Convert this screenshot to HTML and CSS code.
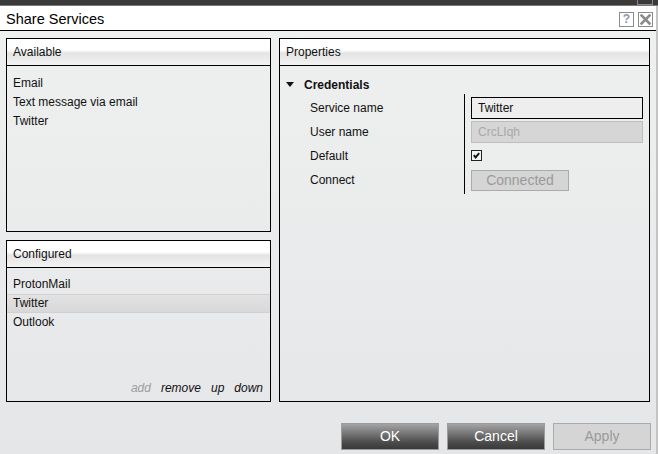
FILE: index.html
```html
<!DOCTYPE html>
<html lang="en">
<head>
    <meta charset="UTF-8">
    <title>Share Services</title>
    <link rel="stylesheet" href="styles.css">
</head>
<body>

<div class="top-strip"><span class="strip-box"></span></div>

<div class="window">
    <!-- Title bar -->
    <div class="title-bar">
        <span class="title">Share Services</span>
        <div class="title-buttons">
            <span class="title-btn help">?</span>
            <span class="title-btn close">
                <svg width="11" height="11" viewBox="0 0 11 11">
                    <path d="M1.5 1.5 L9.5 9.5 M9.5 1.5 L1.5 9.5" stroke="#8a8a8a" stroke-width="2.6" stroke-linecap="square"/>
                </svg>
            </span>
        </div>
    </div>

    <div class="content">
        <div class="left-col">
            <!-- Available services -->
            <div class="panel available">
                <div class="panel-header">Available</div>
                <div class="list">
                    <div class="list-item">Email</div>
                    <div class="list-item">Text message via email</div>
                    <div class="list-item">Twitter</div>
                </div>
            </div>

            <!-- Configured services -->
            <div class="panel configured">
                <div class="panel-header">Configured</div>
                <div class="list">
                    <div class="list-item">ProtonMail</div>
                    <div class="list-item selected">Twitter</div>
                    <div class="list-item">Outlook</div>
                </div>
                <div class="list-actions">
                    <span class="action disabled">add</span>
                    <span class="action">remove</span>
                    <span class="action">up</span>
                    <span class="action">down</span>
                </div>
            </div>
        </div>

        <!-- Properties -->
        <div class="panel properties">
            <div class="panel-header">Properties</div>
            <div class="prop-body">
                <div class="group-head">
                    <span class="triangle"></span>
                    <span class="group-title">Credentials</span>
                </div>
                <div class="prop-grid">
                    <div class="prop-labels">
                        <div class="prop-row">Service name</div>
                        <div class="prop-row">User name</div>
                        <div class="prop-row">Default</div>
                        <div class="prop-row">Connect</div>
                    </div>
                    <div class="prop-values">
                        <div class="prop-row"><div class="field">Twitter</div></div>
                        <div class="prop-row"><div class="field disabled">CrcLIqh</div></div>
                        <div class="prop-row">
                            <span class="checkbox">
                                <svg width="9" height="9" viewBox="0 0 9 9">
                                    <path d="M1.8 4.2 L3.6 6.4 L7.2 2.2" fill="none" stroke="#111" stroke-width="1.9"/>
                                </svg>
                            </span>
                        </div>
                        <div class="prop-row"><div class="small-button">Connected</div></div>
                    </div>
                </div>
            </div>
        </div>
    </div>

    <!-- Dialog buttons -->
    <div class="footer">
        <div class="dlg-button">OK</div>
        <div class="dlg-button">Cancel</div>
        <div class="dlg-button disabled">Apply</div>
    </div>
</div>

</body>
</html>
```

FILE: styles.css
```css
/* Global */
body {
    margin: 0;
    padding: 0;
    width: 658px;
    height: 454px;
    overflow: hidden;
    font-family: "Liberation Sans", Arial, sans-serif;
    font-size: 12px;
    color: #111;
    background-color: #e8e9ea;
}
.top-strip {
    height: 5px;
    background-color: #3a3a3a;
    border-bottom: 1px solid #7a7a7a;
    display: flex;
    justify-content: flex-end;
    padding-right: 5px;
}
.strip-box {
    width: 14px;
    height: 4px;
    border: 1px solid #8a8a8a;
    border-top: none;
}
.window {
    width: 656px;
    height: 448px;
    border-right: 2px solid #c4c4c4;
    background: linear-gradient(#eff1f0, #e5e6e8);
    display: flex;
    flex-direction: column;
}
/* Title bar */
.title-bar {
    height: 24px;
    background-color: #fff;
    border-bottom: 1px solid #000;
    display: flex;
    align-items: center;
    justify-content: space-between;
}
.title {
    font-size: 14.5px;
    padding-left: 6px;
    margin-top: 1px;
    color: #000;
}
.title-buttons {
    display: flex;
    gap: 4px;
    padding-right: 3px;
    margin-top: 3px;
}
.title-btn {
    width: 13px;
    height: 13px;
    border: 1px solid #8a8a8a;
    display: flex;
    align-items: center;
    justify-content: center;
    background-color: #fff;
}
.help {
    font-size: 12px;
    font-weight: bold;
    color: #8a96a8;
    line-height: 13px;
}
/* Layout */
.content {
    display: flex;
    gap: 8px;
    padding: 7px 6px 0 6px;
    height: 364px;
}
.left-col {
    width: 265px;
    display: flex;
    flex-direction: column;
    gap: 8px;
}
.panel {
    box-sizing: border-box;
    border: 1px solid #000;
    display: flex;
    flex-direction: column;
}
.available {
    height: 194px;
}
.configured {
    height: 162px;
}
.properties {
    width: 371px;
    height: 364px;
}
.panel-header {
    height: 25px;
    line-height: 25px;
    padding: 1px 0 0 6px;
    border-bottom: 1px solid #000;
    background: linear-gradient(#ffffff 0%, #ffffff 42%, #e4e4e4 55%, #f3f3f3 100%);
    color: #111;
}
/* Lists */
.list {
    flex: 1;
    padding-top: 8px;
}
.configured .list {
    padding-top: 7px;
}
.list-item {
    height: 19px;
    line-height: 19px;
    padding-left: 6px;
}
.list-item.selected {
    height: 17px;
    line-height: 17px;
    background: linear-gradient(#e2e2e2, #d8d8d8);
    border-top: 1px solid #d0d0d0;
    border-bottom: 1px solid #d0d0d0;
}
.list-actions {
    display: flex;
    justify-content: flex-end;
    gap: 10px;
    padding: 0 7px 3px 0;
    height: 20px;
    line-height: 20px;
    font-style: italic;
}
.action.disabled {
    color: #a0a0a0;
}
/* Properties */
.prop-body {
    padding-top: 8px;
}
.group-head {
    height: 21px;
    display: flex;
    align-items: center;
    padding-left: 6px;
}
.triangle {
    width: 0;
    height: 0;
    border-left: 4px solid transparent;
    border-right: 4px solid transparent;
    border-top: 5px solid #111;
    margin-right: 10px;
}
.group-title {
    font-weight: bold;
    padding-top: 1px;
}
.prop-grid {
    display: flex;
    margin-left: 30px;
}
.prop-labels {
    width: 154px;
}
.prop-labels .prop-row {
    padding-top: 2px;
    height: 22px;
}
.prop-values {
    flex: 1;
    border-left: 1px solid #000;
    padding: 0 6px 3px 6px;
    margin-top: -1px;
    padding-top: 1px;
}
.prop-row {
    height: 24px;
    display: flex;
    align-items: center;
}
.field {
    box-sizing: border-box;
    width: 100%;
    height: 22px;
    line-height: 20px;
    padding-left: 6px;
    border: 1px solid #000;
    background-color: #eeeeee;
    margin-top: 1px;
}
.field.disabled {
    border-color: #bdbdbd;
    background-color: #d6d6d6;
    color: #a8a8a8;
}
.checkbox {
    box-sizing: border-box;
    width: 11px;
    height: 11px;
    border: 1px solid #222;
    background-color: #f2f2f2;
    display: flex;
    align-items: center;
    justify-content: center;
}
.small-button {
    box-sizing: border-box;
    width: 98px;
    height: 21px;
    line-height: 19px;
    text-align: center;
    font-size: 14px;
    color: #9a9a9a;
    background-color: #d5d5d5;
    border: 1px solid #ababab;
    margin-top: 3px;
}
/* Dialog buttons */
.footer {
    display: flex;
    justify-content: flex-end;
    gap: 8px;
    padding: 21px 5px 0 0;
}
.dlg-button {
    box-sizing: border-box;
    width: 98px;
    height: 27px;
    line-height: 25px;
    text-align: center;
    font-size: 14px;
    color: #fff;
    border: 1px solid #9c9c9c;
    background: linear-gradient(#a4a4a4 0%, #6e6e6e 45%, #4a4a4a 75%, #3a3a3a 100%);
}
.dlg-button.disabled {
    color: #9a9a9a;
    background: #d5d5d5;
    border-color: #ababab;
}
```
